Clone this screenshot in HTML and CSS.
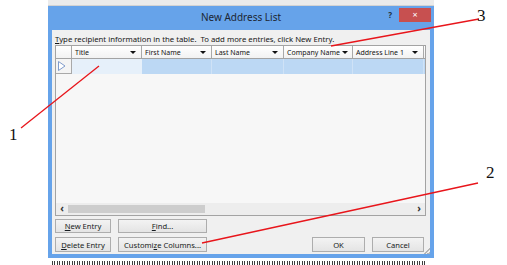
FILE: index.html
```html
<!DOCTYPE html>
<html>
<head>
<meta charset="utf-8">
<link rel="stylesheet" href="styles.css">
</head>
<body>
<div class="page">
  <div class="window">
    <div class="topstrip"></div>
    <div class="titlebar">
      <span class="title">New Address List</span>
      <div class="controls">
        <span class="help">?</span>
        <span class="close">×</span>
      </div>
    </div>
    <div class="body">
      <p class="hint"><u>T</u>ype recipient information in the table.&nbsp; To add more entries, click New Entry.</p>
      <div class="grid">
        <div class="cols hdr">
          <div class="hcell corner"></div>
          <div class="hcell"><span>Title</span><i class="arrow"></i></div>
          <div class="hcell"><span>First Name</span><i class="arrow"></i></div>
          <div class="hcell"><span>Last Name</span><i class="arrow"></i></div>
          <div class="hcell"><span>Company Name</span><i class="arrow"></i></div>
          <div class="hcell"><span>Address Line 1</span><i class="arrow"></i></div>
          <div class="hcell rest"></div>
        </div>
        <div class="cols datarow">
          <div class="sel"><svg width="10" height="12" viewBox="0 0 10 12"><polygon points="1.5,1.5 8,6 1.5,10.5" fill="#fff" stroke="#7f9bcb" stroke-width="1"/></svg></div>
          <div class="dcell current"></div>
          <div class="dcell"></div>
          <div class="dcell"></div>
          <div class="dcell"></div>
          <div class="dcell"></div>
          <div class="dcell rest"></div>
        </div>
        <div class="empty"></div>
        <div class="hscroll">
          <span class="sbtn">&lsaquo;</span>
          <span class="thumb"></span>
          <span class="track"></span>
          <span class="sbtn">&rsaquo;</span>
        </div>
      </div>
      <div class="actions">
        <button class="btn b-new"><u>N</u>ew Entry</button>
        <button class="btn b-find"><u>F</u>ind...</button>
        <button class="btn b-del"><u>D</u>elete Entry</button>
        <button class="btn b-cust">Customi<u>z</u>e Columns...</button>
        <button class="btn b-ok">OK</button>
        <button class="btn b-cancel">Cancel</button>
      </div>
      <span class="grip"></span>
    </div>
  </div>
  <div class="docline"></div>
</div>

<svg class="callouts" width="507" height="265" viewBox="0 0 507 265">
  <line x1="21" y1="128" x2="99" y2="66"/>
  <line x1="202" y1="243" x2="478" y2="183"/>
  <line x1="331" y1="46" x2="479" y2="19"/>
</svg>
<span class="label l1">1</span>
<span class="label l2">2</span>
<span class="label l3">3</span>
</body>
</html>
```
FILE: styles.css
```css
* { box-sizing: border-box; }
html, body { margin: 0; padding: 0; background: #fff; }
body {
  width: 507px;
  height: 265px;
  overflow: hidden;
  position: relative;
  font-family: "Noto Sans", "Liberation Sans", sans-serif;
}
.page { padding-left: 48px; }
.window { width: 386px; display: flex; flex-direction: column; }
.topstrip {
  height: 6px;
  background: #ebebeb;
  border-bottom: 1px solid #d3d3d3;
}
.titlebar {
  height: 24px;
  background: #66a3ea;
  display: grid;
  grid-template-columns: 1fr auto 1fr;
  align-items: start;
}
.title {
  grid-column: 2;
  font-size: 10px;
  line-height: 22px;
  color: #1c2633;
}
.controls {
  grid-column: 3;
  justify-self: end;
  display: flex;
  align-items: center;
  margin-top: 2px;
  margin-right: 3px;
}
.help {
  font-size: 8px;
  font-weight: bold;
  color: #22303f;
  margin-right: 7px;
  line-height: 14px;
}
.close {
  width: 32px;
  height: 14px;
  background: #c75050;
  color: #fff;
  font-size: 9px;
  line-height: 14px;
  text-align: center;
}
.body {
  position: relative;
  height: 228px;
  background: #f0f0f0;
  border: 4px solid #66a3ea;
  border-top: 0;
  padding: 3px 4px 0 3px;
  display: flex;
  flex-direction: column;
}
.hint {
  margin: 0;
  font-size: 7.75px;
  line-height: 12px;
  color: #161616;
  white-space: nowrap;
}
.hint u, .btn u { text-decoration-thickness: 1px; text-underline-offset: 1px; }
.grid {
  width: 371px;
  height: 171px;
  border: 1px solid #a3a3a3;
  background: #f7f7f7;
  display: flex;
  flex-direction: column;
}
.cols {
  display: grid;
  grid-template-columns: 16px 70px 70px 72px 69px 71px 1fr;
}
.hdr {
  height: 13px;
  border-bottom: 1px solid #a3a3a3;
  background: linear-gradient(#ffffff, #f2f2f2);
}
.hcell {
  border-right: 1px solid #a9a9a9;
  display: flex;
  align-items: center;
  justify-content: space-between;
  padding: 0 5px 0 3px;
  font-size: 7px;
  color: #141414;
  white-space: nowrap;
  overflow: hidden;
}
.hcell.rest { border-right: 0; padding: 0; }
.arrow {
  width: 0;
  height: 0;
  border-left: 3px solid transparent;
  border-right: 3px solid transparent;
  border-top: 3px solid #111;
  flex: none;
  margin-left: 2px;
}
.datarow { height: 15px; }
.sel {
  border-right: 1px solid #a9a9a9;
  border-bottom: 1px solid #a9a9a9;
  background: #f4f4f4;
  display: flex;
  align-items: center;
  padding-left: 1px;
}
.dcell {
  background: #bcd8f4;
  border-right: 1px solid #cfe2f6;
}
.dcell.current { background: #e6f0fa; border-right-color: #e6f0fa; }
.dcell.rest { border-right: 0; }
.empty { flex: 1; }
.hscroll {
  height: 12px;
  display: flex;
  align-items: center;
  background: #ededed;
}
.sbtn {
  width: 12px;
  height: 12px;
  font-size: 10px;
  line-height: 11px;
  text-align: center;
  color: #333;
  font-weight: bold;
  flex: none;
}
.thumb {
  width: 137px;
  height: 8px;
  background: #cdcdcd;
  flex: none;
}
.track { flex: 1; }
.actions {
  margin-top: 3px;
  width: 369px;
  display: grid;
  grid-template-columns: 56px 89px 1fr 53px 52px;
  grid-template-rows: 14px 15px;
  column-gap: 7px;
  row-gap: 4px;
}
.btn {
  margin: 0;
  padding: 0;
  border: 1px solid #adadad;
  background: linear-gradient(#f3f3f3, #e4e4e4);
  font-family: "Noto Sans", "Liberation Sans", sans-serif;
  font-size: 7.6px;
  color: #161b20;
  display: flex;
  align-items: center;
  justify-content: center;
  white-space: nowrap;
}
.b-new { grid-column: 1; grid-row: 1; }
.b-find { grid-column: 2; grid-row: 1; }
.b-del { grid-column: 1; grid-row: 2; }
.b-cust { grid-column: 2; grid-row: 2; }
.b-ok { grid-column: 4; grid-row: 2; }
.b-cancel { grid-column: 5; grid-row: 2; }
.grip {
  position: absolute;
  right: 0;
  bottom: 0;
  width: 6px;
  height: 6px;
  background: linear-gradient(135deg, transparent 45%, #b5b5b5 45%, #b5b5b5 60%, transparent 60%, transparent 75%, #b5b5b5 75%);
}
.docline {
  margin-top: 3px;
  margin-left: 4px;
  width: 373px;
  height: 4px;
  background:
    repeating-linear-gradient(90deg, #1c1c1c 0 1px, transparent 1px 2px, #1c1c1c 2px 3px, transparent 3px 5px);
  opacity: 0.85;
}
.callouts {
  position: absolute;
  left: 0;
  top: 0;
  pointer-events: none;
}
.callouts line { stroke: #e8151b; stroke-width: 1.3; }
.label {
  position: absolute;
  font-family: "Liberation Serif", serif;
  font-size: 17px;
  line-height: 17px;
  color: #111;
}
.l1 { left: 9px; top: 126px; }
.l2 { left: 486px; top: 164px; }
.l3 { left: 477px; top: 7px; }
```
